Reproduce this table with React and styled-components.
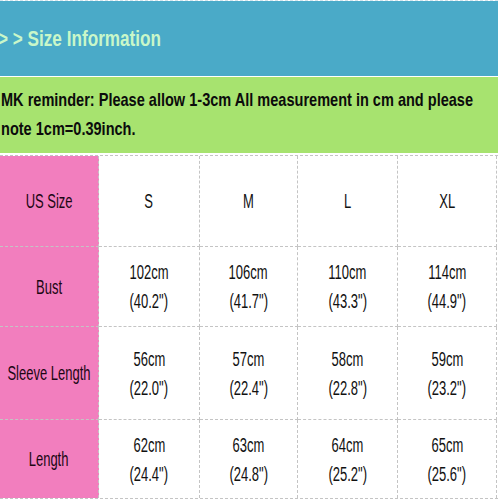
import React from 'react';
import styled, { createGlobalStyle } from 'styled-components';

const GlobalStyle = createGlobalStyle`
  body {
    margin: 0;
    background: #fff;
    font-family: "Liberation Sans", Arial, sans-serif;
  }
`;

const Page = styled.div`
  width: 498px;
  overflow: hidden;
  border-top: 1px dashed #d6e6ee;
`;

const Banner = styled.div`
  height: 75px;
  background: #4aaac8;
  display: flex;
  align-items: center;
  color: #c9f7c9;
  font-weight: bold;
  font-size: 22px;
`;

const Narrow = styled.span`
  display: inline-block;
  white-space: nowrap;
  transform: scaleX(${(p) => p.$scale || 0.65});
  transform-origin: ${(p) => (p.$left ? 'left center' : 'center')};
  margin-left: ${(p) => p.$shift || 0}px;
`;

const Reminder = styled.div`
  height: 76px;
  margin-top: 1px;
  background: #a7e36f;
  box-sizing: border-box;
  padding: 8px 0 0 1px;
  color: #0c0c0c;
  font-weight: bold;
  font-size: 19px;
  line-height: 29px;
  display: flex;
  flex-direction: column;
`;

const Grid = styled.div`
  display: grid;
  grid-template-columns: 99px 101px 98px 100px 99px;
  grid-template-rows: 91px 80px 93px 78px;
  margin-top: 2px;
  border-top: 1px dashed #c4c4c4;
  border-bottom: 1px dashed #c4c4c4;
`;

const Cell = styled.div`
  display: flex;
  flex-direction: column;
  align-items: center;
  justify-content: center;
  box-sizing: border-box;
  border-right: 1px dashed #c4c4c4;
  border-bottom: ${(p) => (p.$last ? 'none' : '1px dashed #c4c4c4')};
  background: ${(p) => (p.$label ? '#f27ebe' : '#fff')};
  color: ${(p) => (p.$label ? '#1c0714' : '#111')};
  font-size: 20px;
  line-height: 29px;
  padding-top: 1px;
`;

const sizes = ['S', 'M', 'L', 'XL'];

const rows = [
  { label: 'Bust', values: [['102cm', '(40.2")'], ['106cm', '(41.7")'], ['110cm', '(43.3")'], ['114cm', '(44.9")']] },
  { label: 'Sleeve Length', values: [['56cm', '(22.0")'], ['57cm', '(22.4")'], ['58cm', '(22.8")'], ['59cm', '(23.2")']] },
  { label: 'Length', values: [['62cm', '(24.4")'], ['63cm', '(24.8")'], ['64cm', '(25.2")'], ['65cm', '(25.6")']] },
];

export default function App() {
  return (
    <>
      <GlobalStyle />
      <Page>
        <Banner>
          <Narrow $left $scale={0.78} $shift={-2}>&gt; &gt; Size Information</Narrow>
        </Banner>
        <Reminder>
          <Narrow $left $scale={0.765}>
            MK reminder: Please allow 1-3cm All measurement in cm and please
          </Narrow>
          <Narrow $left $scale={0.765}>note 1cm=0.39inch.</Narrow>
        </Reminder>
        <Grid>
          <Cell $label>
            <Narrow>US Size</Narrow>
          </Cell>
          {sizes.map((s) => (
            <Cell key={s}>
              <Narrow>{s}</Narrow>
            </Cell>
          ))}
          {rows.map((row, i) => (
            <React.Fragment key={row.label}>
              <Cell $label $last={i === rows.length - 1}>
                <Narrow>{row.label}</Narrow>
              </Cell>
              {row.values.map(([cm, inch]) => (
                <Cell key={cm} $last={i === rows.length - 1}>
                  <Narrow>{cm}</Narrow>
                  <Narrow>{inch}</Narrow>
                </Cell>
              ))}
            </React.Fragment>
          ))}
        </Grid>
      </Page>
    </>
  );
}
